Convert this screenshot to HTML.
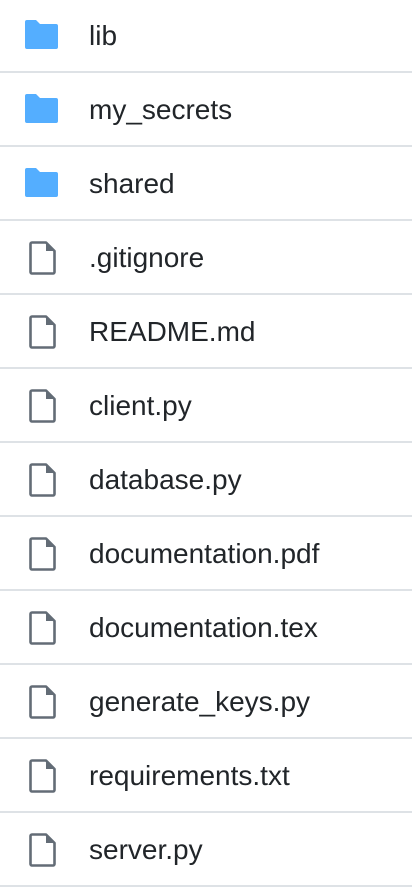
<!DOCTYPE html>
<html><head><style>
body{margin:0;width:412px;height:887px;overflow:hidden;background:#fff;font-family:"Liberation Sans",sans-serif;}
.list{margin-top:-1px}
.row{height:72px;border-bottom:2px solid #dee2e6;position:relative;}
.row span{position:absolute;left:89px;top:21px;font-size:28px;color:#212529;line-height:32px}
.row svg{position:absolute}
.f{left:25px;top:21px}
.d{left:28px;top:19px}
</style></head><body><div class="list">
<div class="row"><svg class="f" width="33" height="29" viewBox="0 0 33 29"><path d="M2 0h9l4 4h16a2 2 0 0 1 2 2v21a2 2 0 0 1-2 2H2a2 2 0 0 1-2-2V2a2 2 0 0 1 2-2z" fill="#54aeff"/></svg><span>lib</span></div>
<div class="row"><svg class="f" width="33" height="29" viewBox="0 0 33 29"><path d="M2 0h9l4 4h16a2 2 0 0 1 2 2v21a2 2 0 0 1-2 2H2a2 2 0 0 1-2-2V2a2 2 0 0 1 2-2z" fill="#54aeff"/></svg><span>my_secrets</span></div>
<div class="row"><svg class="f" width="33" height="29" viewBox="0 0 33 29"><path d="M2 0h9l4 4h16a2 2 0 0 1 2 2v21a2 2 0 0 1-2 2H2a2 2 0 0 1-2-2V2a2 2 0 0 1 2-2z" fill="#54aeff"/></svg><span>shared</span></div>
<div class="row"><svg class="d" width="30" height="36" viewBox="0 0 30 36"><path d="M4 2.5h14l8.5 8.5v21a1.5 1.5 0 0 1-1.5 1.5H4a1.5 1.5 0 0 1-1.5-1.5V4A1.5 1.5 0 0 1 4 2.5z" fill="none" stroke="#636c76" stroke-width="2.6" stroke-linejoin="round"/><path d="M18 3v8h8z" fill="#636c76"/></svg><span>.gitignore</span></div>
<div class="row"><svg class="d" width="30" height="36" viewBox="0 0 30 36"><path d="M4 2.5h14l8.5 8.5v21a1.5 1.5 0 0 1-1.5 1.5H4a1.5 1.5 0 0 1-1.5-1.5V4A1.5 1.5 0 0 1 4 2.5z" fill="none" stroke="#636c76" stroke-width="2.6" stroke-linejoin="round"/><path d="M18 3v8h8z" fill="#636c76"/></svg><span>README.md</span></div>
<div class="row"><svg class="d" width="30" height="36" viewBox="0 0 30 36"><path d="M4 2.5h14l8.5 8.5v21a1.5 1.5 0 0 1-1.5 1.5H4a1.5 1.5 0 0 1-1.5-1.5V4A1.5 1.5 0 0 1 4 2.5z" fill="none" stroke="#636c76" stroke-width="2.6" stroke-linejoin="round"/><path d="M18 3v8h8z" fill="#636c76"/></svg><span>client.py</span></div>
<div class="row"><svg class="d" width="30" height="36" viewBox="0 0 30 36"><path d="M4 2.5h14l8.5 8.5v21a1.5 1.5 0 0 1-1.5 1.5H4a1.5 1.5 0 0 1-1.5-1.5V4A1.5 1.5 0 0 1 4 2.5z" fill="none" stroke="#636c76" stroke-width="2.6" stroke-linejoin="round"/><path d="M18 3v8h8z" fill="#636c76"/></svg><span>database.py</span></div>
<div class="row"><svg class="d" width="30" height="36" viewBox="0 0 30 36"><path d="M4 2.5h14l8.5 8.5v21a1.5 1.5 0 0 1-1.5 1.5H4a1.5 1.5 0 0 1-1.5-1.5V4A1.5 1.5 0 0 1 4 2.5z" fill="none" stroke="#636c76" stroke-width="2.6" stroke-linejoin="round"/><path d="M18 3v8h8z" fill="#636c76"/></svg><span>documentation.pdf</span></div>
<div class="row"><svg class="d" width="30" height="36" viewBox="0 0 30 36"><path d="M4 2.5h14l8.5 8.5v21a1.5 1.5 0 0 1-1.5 1.5H4a1.5 1.5 0 0 1-1.5-1.5V4A1.5 1.5 0 0 1 4 2.5z" fill="none" stroke="#636c76" stroke-width="2.6" stroke-linejoin="round"/><path d="M18 3v8h8z" fill="#636c76"/></svg><span>documentation.tex</span></div>
<div class="row"><svg class="d" width="30" height="36" viewBox="0 0 30 36"><path d="M4 2.5h14l8.5 8.5v21a1.5 1.5 0 0 1-1.5 1.5H4a1.5 1.5 0 0 1-1.5-1.5V4A1.5 1.5 0 0 1 4 2.5z" fill="none" stroke="#636c76" stroke-width="2.6" stroke-linejoin="round"/><path d="M18 3v8h8z" fill="#636c76"/></svg><span>generate_keys.py</span></div>
<div class="row"><svg class="d" width="30" height="36" viewBox="0 0 30 36"><path d="M4 2.5h14l8.5 8.5v21a1.5 1.5 0 0 1-1.5 1.5H4a1.5 1.5 0 0 1-1.5-1.5V4A1.5 1.5 0 0 1 4 2.5z" fill="none" stroke="#636c76" stroke-width="2.6" stroke-linejoin="round"/><path d="M18 3v8h8z" fill="#636c76"/></svg><span>requirements.txt</span></div>
<div class="row"><svg class="d" width="30" height="36" viewBox="0 0 30 36"><path d="M4 2.5h14l8.5 8.5v21a1.5 1.5 0 0 1-1.5 1.5H4a1.5 1.5 0 0 1-1.5-1.5V4A1.5 1.5 0 0 1 4 2.5z" fill="none" stroke="#636c76" stroke-width="2.6" stroke-linejoin="round"/><path d="M18 3v8h8z" fill="#636c76"/></svg><span>server.py</span></div>
</div></body></html>
